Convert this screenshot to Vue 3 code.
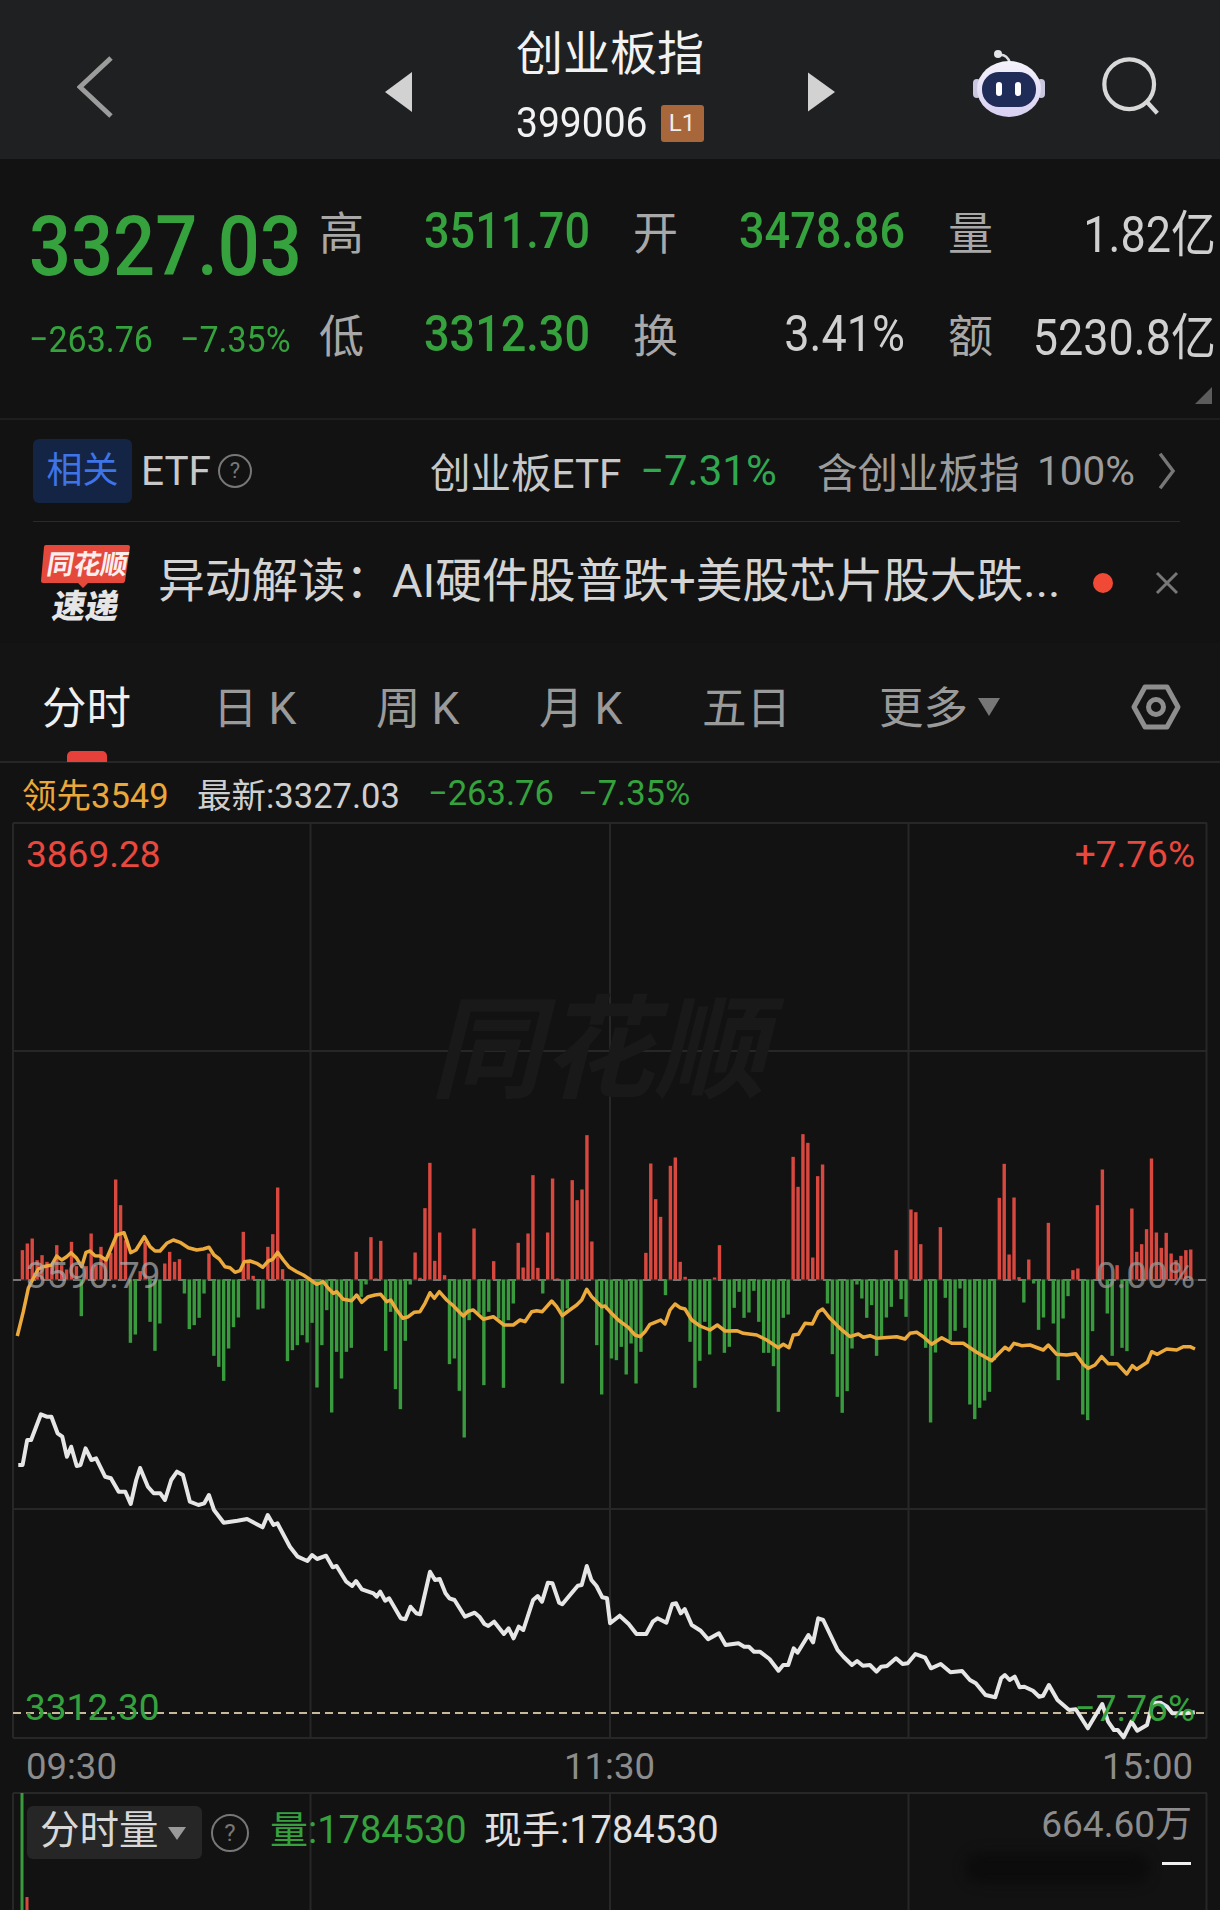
<script setup>
const tabs = [
  { label: '分时', active: true },
  { label: '日 K' },
  { label: '周 K' },
  { label: '月 K' },
  { label: '五日' }
]

const quotes = [
  { label: '高', value: '3511.70', tone: 'down' },
  { label: '开', value: '3478.86', tone: 'down' },
  { label: '量', value: '1.82亿', tone: 'flat' },
  { label: '低', value: '3312.30', tone: 'down' },
  { label: '换', value: '3.41%', tone: 'flat' },
  { label: '额', value: '5230.8亿', tone: 'flat' }
]

const gridX = [13, 310.5, 610, 908.5, 1206.5]
const gridY = [823, 1051, 1280, 1509, 1738]

// one value per minute, traced at 3x, positive = buy side
const flow = [
  0, 88, 108, 123, 58, 73, 53, 43, 103, 43, 30, 113, 40, -110, 40, 138, 43, 98, 60, 80,
  300, 223, 118, -190, -165, 25, 113, -127, -214, -132, 48, 83, 53, 61, -42, -149, -137, -115, -42, 78,
  -229, -262, -304, -207, -143, -114, 143, 58, 11, -90, -87, 98, 136, 276, 31, -245, -212, -197, -167, -189,
  -130, -324, -197, -92, -399, -217, -297, -217, -205, 83, -52, -15, 127, 3, 116, -214, -97, -329, -389, -184,
  -15, 81, 5, 214, 350, 56, 141, 13, -254, -237, -334, -474, -122, 153, -102, -317, -97, 55, -117, -325,
  -122, -72, 110, 36, 138, 313, 35, -42, 141, 303, 3, -312, -87, 298, 238, 270, 433, 114, -197, -345,
  -90, -237, -242, -202, -285, -192, -312, -217, 80, 348, 241, 188, -47, 341, 366, 53, 8, -187, -325, -244,
  -127, -225, 6, 103, -220, -202, -85, -37, -115, -99, -34, -127, -220, -220, -260, -397, -115, -105, 368, 278,
  436, 410, 66, 310, 345, -72, -224, -352, -400, -335, -207, -15, -57, -115, -77, -229, -172, -114, -82, 88,
  -59, -112, 210, 202, 106, -205, -429, -219, 157, -55, -182, -154, -27, -145, -375, -419, -385, -363, -337, -242,
  245, 347, 75, 246, 7, -69, 60, -12, -151, -114, 170, -132, -302, -117, -50, 28, 33, -405, -422, -155,
  223, 330, -102, -229, 43, -205, -215, 213, 83, 106, 151, 363, 141, 95, 140, 78, 58, 71, 88, 90, 0
]

const bars = flow
  .map((v, i) => ({ x: 15.8 + i * 4.909, v: v / 3 }))
  .filter(b => b.v !== 0)
  .map(b => ({
    x: b.x,
    y: b.v > 0 ? 1279.5 - b.v : 1279.5,
    h: Math.abs(b.v),
    color: b.v > 0 ? '#d9483f' : '#3a9a3e'
  }))

// traced points are in crop coordinates, this maps them back onto the page
function trace(pts, x0, y0, sx, sy) {
  const out = []
  for (let i = 0; i < pts.length; i += 2) {
    out.push((x0 + pts[i] / sx).toFixed(1) + ',' + (y0 + pts[i + 1] / sy).toFixed(1))
  }
  return out
}

const avgLine = [
  ...trace([22,633,40,560,55,490,70,460,85,432,100,425,125,420,140,393,155,405,170,395,183,383,200,400,215,425,228,382,240,378,255,392,270,393,288,405,305,365,320,330,342,323,350,345,362,383,378,375,403,335,420,365,435,378,450,378,470,355,490,345,510,352,535,368,560,375,580,372,597,367,612,390,628,402,645,425,660,428,675,442,690,437,703,410,720,408,740,415,758,427,775,408,788,403,803,382,820,405,838,427,860,440,880,450,898,462], 10, 1125, 3, 3),
  ...trace([20,478,40,470,55,490,70,505,80,500,100,523,125,527,140,510,155,532,175,515,195,510,212,508,230,530,242,525,260,555,278,580,295,575,312,562,330,560,345,535,360,503,373,520,388,500,410,525,430,542,460,573,475,558,490,555,520,583,550,575,582,600,610,600,630,585,645,590,665,560,680,557,697,560,725,528,740,545,757,572,775,558,800,540,815,525,830,493,845,515,875,545,885,543,900,560], 310, 1125, 3, 3),
  ...trace([25,585,55,607,75,630,90,635,105,620,120,598,135,592,152,585,165,597,180,555,195,537,210,548,225,552,245,585,270,603,300,615,322,600,345,618,380,617,400,625,440,630,470,645,505,668,520,658,537,668,550,630,565,628,585,595,607,597,625,560,638,552,660,580,690,610,720,635,745,627,760,637,780,632,800,640,860,635,885,642,900,625], 610, 1125, 3, 3),
  ...trace([20,622,40,635,65,658,95,638,125,655,160,655,200,682,245,707,270,682,285,667,297,675,312,655,335,662,360,660,400,675,415,660,440,688,470,690,497,686,520,718,535,730,555,720,575,695,595,716,622,716,650,747,667,722,680,733,712,712,725,680,742,688,770,672,800,675,820,665,840,665,855,672], 910, 1125, 3, 3)
].join(' ')

const priceLine = [
  ...trace([47,1095,58,1095,70,1020,80,1020,105,943,120,950,132,950,148,1000,160,1010,172,1070,183,1040,197,1098,207,1095,220,1045,235,1080,247,1075,270,1130,285,1135], 0, 1100, 2.57, 3),
  ...trace([305,35,322,35,336,72,350,0,360,-36,380,20,395,40,412,40,424,60,440,0,455,-25,470,-15,478,20,488,65,510,75,525,70,537,45,550,90,575,128,610,122,635,117,675,142,688,105,703,135,713,130,745,200,765,230,790,243,802,225,815,237,838,227,855,262,865,258,890,305,905,318,915,303,930,328,960,340,968,350,977,335,990,362,1000,355,1030,415,1042,418,1055,380,1070,400,1080,403,1105,275,1118,300,1130,297,1145,340,1155,355,1168,360,1195,410,1220,398,1232,410,1245,432,1255,438,1270,425,1295,462,1307,445,1320,475,1333,440,1345,450,1370,360,1382,348,1393,365,1408,308,1420,310,1437,368,1445,373,1465,345,1485,317,1495,315,1508,258,1520,300,1533,318,1548,352,1560,355,1568,430], 0, 1480, 2.57, 3),
  ...trace([25,407,48,432,68,462,93,462,110,425,122,415,145,428,160,372,170,370,182,400,192,387,210,435,233,452,252,478,280,460,297,495,330,490,345,500,357,500,370,515,385,515,410,537,433,572,445,555,458,555,472,505,482,518,510,465,522,487,535,415,548,420,585,510,600,530,622,555,635,543,650,557,668,555,685,575,697,560,712,558,735,535,752,552,765,550,785,522,810,533,825,565,850,552,875,577,905,573,925,600,940,610,965,645,990,652,1005,595,1015,585,1027,600,1040,590,1053,622,1065,620,1087,632,1103,650,1113,647,1128,615,1150,660,1180,690,1197,688,1228,745,1265,672,1280,725,1295,750,1305,750,1320,772,1340,725,1355,752,1380,735,1395,668,1415,668,1432,680,1445,700,1480,700,1503,697], 610, 1480, 2.57, 3)
].join(' ')
</script>

<template>
  <div class="page">
    <header class="topbar">
      <svg class="back" viewBox="0 0 36 62" fill="none">
        <path d="M34 2 3 31l31 29" />
      </svg>
      <div class="title-wrap">
        <svg class="tri" viewBox="0 0 27 40"><path d="M27 0v40L0 20z" /></svg>
        <div class="title">
          <div class="name">创业板指</div>
          <div class="code"><span class="code-num">399006</span><span class="level">L1</span></div>
        </div>
        <svg class="tri" viewBox="0 0 25 36"><path d="M0 0v36l25-18z" /></svg>
      </div>
      <svg class="robot" viewBox="0 0 72 68">
        <defs>
          <linearGradient id="shell" x1="0" y1="0" x2="0" y2="1">
            <stop offset="0" stop-color="#f4f2fb" />
            <stop offset="1" stop-color="#d8cff2" />
          </linearGradient>
        </defs>
        <path d="M25 5c6-1 10 2 12 8" fill="none" stroke="#dcdce4" stroke-width="2.5" />
        <circle cx="25" cy="4" r="4" fill="#e4e4ea" />
        <rect x="0" y="29" width="8" height="19" rx="4" fill="#c9c6de" />
        <rect x="64" y="29" width="8" height="19" rx="4" fill="#c9c6de" />
        <ellipse cx="36" cy="39" rx="32" ry="28" fill="url(#shell)" />
        <rect x="9" y="22" width="54" height="35" rx="17" fill="#202c58" />
        <rect x="23" y="32" width="6" height="14" rx="3" fill="#fff" />
        <rect x="42" y="32" width="6" height="14" rx="3" fill="#fff" />
      </svg>
      <svg class="search" viewBox="0 0 64 64" fill="none">
        <circle cx="29" cy="29" r="26.5" />
        <path d="m48 48 11 12" />
      </svg>
    </header>

    <section class="quote">
      <div class="price-col">
        <div class="price">3327.03</div>
        <div class="change"><span>−263.76</span><span>−7.35%</span></div>
      </div>
      <div class="quote-grid">
        <div v-for="q in quotes" :key="q.label" class="quote-cell">
          <span class="q-label">{{ q.label }}</span>
          <span class="q-value" :class="q.tone">{{ q.value }}</span>
        </div>
      </div>
      <span class="corner"></span>
    </section>

    <section class="etf">
      <span class="etf-badge">相关</span>
      <span class="etf-name">ETF</span>
      <span class="help etf-help">?</span>
      <span class="etf-fund">创业板ETF</span>
      <span class="etf-pct">−7.31%</span>
      <span class="etf-hold">含创业板指</span>
      <span class="etf-share">100%</span>
      <svg class="etf-arrow" viewBox="0 0 20 44" fill="none"><path d="m2 2 15 20L2 42" /></svg>
    </section>

    <section class="news">
      <svg class="news-logo" viewBox="0 0 90 76">
        <path d="M5 0h82q2 0 2 2l-5 34q-.5 2-2 2H47l-5 5-5-5H2q-2 0-2-2L3 2q0-2 2-2z" fill="#e4493c" />
        <text class="logo-top" x="45" y="29" text-anchor="middle" transform="skewX(-10) translate(5 0)">同花顺</text>
        <text class="logo-bottom" x="44" y="73" text-anchor="middle" transform="skewX(-10) translate(12 0)">速递</text>
      </svg>
      <span class="news-text">异动解读：AI硬件股普跌+美股芯片股大跌...</span>
      <span class="news-dot"></span>
      <svg class="news-close" viewBox="0 0 24 24" fill="none"><path d="m2 2 20 20M22 2 2 22" /></svg>
    </section>

    <nav class="tabs">
      <div v-for="t in tabs" :key="t.label" class="tab" :class="{ active: t.active }">{{ t.label }}</div>
      <div class="tab more">更多<i class="more-arrow"></i></div>
      <svg class="hex" viewBox="0 0 50 46" fill="none">
        <path d="M14 3h22l11 20-11 20H14L3 23z" />
        <circle cx="25" cy="23" r="7.5" />
      </svg>
    </nav>

    <div class="latest">
      <span class="lead">领先3549</span>
      <span class="now">最新:3327.03</span>
      <span class="down">−263.76</span>
      <span class="down">−7.35%</span>
    </div>

    <div class="chart">
      <svg class="plot" viewBox="13 823 1194 915">
        <line v-for="x in gridX" :key="x" :x1="x" :x2="x" y1="823" y2="1738" class="grid" />
        <line v-for="y in gridY" :key="y" x1="13" x2="1207" :y1="y" :y2="y" class="grid" />
        <line x1="13" x2="1207" y1="1280" y2="1280" class="mid" />
        <rect v-for="b in bars" :key="b.x" :x="b.x" :y="b.y" width="3.4" :height="b.h" :fill="b.color" />
        <line x1="13" x2="1207" y1="1713" y2="1713" class="low" />
        <polyline :points="avgLine" class="avg" />
        <polyline :points="priceLine" class="last" />
      </svg>
      <div class="watermark">同花顺</div>
      <span class="axis tl up">3869.28</span>
      <span class="axis tr up">+7.76%</span>
      <span class="axis ml">3590.79</span>
      <span class="axis mr">0.00%</span>
      <span class="axis bl down">3312.30</span>
      <span class="axis br down">−7.76%</span>
    </div>

    <div class="times"><span>09:30</span><span>11:30</span><span>15:00</span></div>

    <div class="volume">
      <svg class="plot" viewBox="13 1793 1194 117">
        <line v-for="x in gridX" :key="x" :x1="x" :x2="x" y1="1793" y2="1910" class="grid" />
        <line x1="13" x2="1207" y1="1793" y2="1793" class="grid" />
        <rect x="20.5" y="1793" width="3" height="117" fill="#3a9a3e" />
        <rect x="25.5" y="1897" width="3" height="13" fill="#d9483f" />
      </svg>
      <div class="vol-row">
        <div class="vol-select">分时量<i class="vol-arrow"></i></div>
        <span class="help vol-help">?</span>
        <span class="vol-qty">量:1784530</span>
        <span class="vol-hand">现手:1784530</span>
      </div>
      <span class="vol-max">664.60万</span>
      <span class="smudge"></span>
      <span class="vol-mark"></span>
    </div>
  </div>
</template>

<style scoped>
.page {
  position: relative;
  width: 1220px;
  height: 1910px;
  overflow: hidden;
  background: #121212;
  color: #d8d8d8;
  font-family: Roboto, "Noto Sans CJK SC", sans-serif;
}

.topbar {
  position: relative;
  height: 159px;
  background: #1e2021;
}

.back {
  position: absolute;
  left: 77px;
  top: 56px;
  width: 36px;
  height: 62px;
  stroke: #9c9c9c;
  stroke-width: 5;
}

.title-wrap {
  position: absolute;
  left: 385px;
  top: 24px;
  width: 450px;
  display: flex;
  align-items: center;
  justify-content: space-between;
}

.tri {
  width: 27px;
  height: 40px;
  margin-top: 14px;
  fill: #d2d2d2;
}

.title {
  text-align: center;
  color: #f2f2f2;
}

.name {
  font-size: 47px;
  line-height: 60px;
}

.code {
  display: flex;
  align-items: center;
  margin-top: 17px;
  font-size: 39px;
  line-height: 44px;
}

.code-num {
  transform: scaleY(1.1);
}

.level {
  width: 43px;
  height: 37px;
  margin-left: 13px;
  border-radius: 3px;
  background: #a8673a;
  color: #eee;
  font-size: 24px;
  line-height: 37px;
}

.robot {
  position: absolute;
  left: 973px;
  top: 50px;
  width: 72px;
  height: 68px;
}

.search {
  position: absolute;
  left: 1102px;
  top: 57px;
  width: 60px;
  height: 60px;
  stroke: #d8d8d8;
  stroke-width: 4.5;
}

.quote {
  position: relative;
  display: flex;
  height: 261px;
  border-bottom: 2px solid #1e1e1e;
  box-sizing: border-box;
}

.price-col {
  width: 319px;
  padding: 47px 0 0 29px;
  box-sizing: border-box;
  color: #35a23e;
}

.price {
  font-size: 74px;
  font-weight: 500;
  line-height: 82px;
  transform: scaleY(1.12);
  transform-origin: left center;
}

.change {
  display: flex;
  gap: 27px;
  margin-top: 31px;
  font-size: 34px;
  line-height: 40px;
  white-space: nowrap;
  transform: scaleY(1.1);
  transform-origin: left center;
}

.quote-grid {
  display: grid;
  grid-template-columns: 271px 272px 268px;
  column-gap: 43px;
  grid-auto-rows: 103px;
  padding-top: 20px;
}

.quote-cell {
  display: flex;
  align-items: center;
  justify-content: space-between;
  height: 102px;
}

.q-label {
  font-size: 45px;
  color: #a8a8a8;
}

.q-value {
  display: inline-block;
  font-size: 45px;
  transform: scaleY(1.12);
  transform-origin: right center;
}

.q-value.down {
  color: #35a23e;
  font-weight: 500;
}

.q-value.flat {
  color: #d0d0d0;
}

.corner {
  position: absolute;
  right: 8px;
  bottom: 14px;
  width: 17px;
  height: 17px;
  background: #5c5c5c;
  clip-path: polygon(100% 0, 100% 100%, 0 100%);
}

.etf {
  display: flex;
  align-items: center;
  height: 101px;
  margin: 0 40px 0 33px;
  border-bottom: 1px solid #2a2a2a;
  font-size: 40.5px;
  color: #c8c8c8;
  white-space: nowrap;
}

.etf-badge {
  width: 99px;
  height: 64px;
  border-radius: 6px;
  background: #142444;
  color: #3f74e8;
  font-size: 36px;
  line-height: 64px;
  text-align: center;
}

.etf-name {
  margin-left: 9px;
  width: 77px;
}

.help {
  display: inline-block;
  box-sizing: border-box;
  border: 2px solid #777;
  border-radius: 50%;
  color: #777;
  text-align: center;
}

.etf-help {
  width: 34px;
  height: 34px;
  font-size: 22px;
  line-height: 30px;
}

.etf-fund {
  margin-left: 178px;
  width: 210px;
}

.etf-pct {
  width: 177px;
  font-size: 42px;
  color: #2fa84f;
}

.etf-hold {
  width: 220px;
  color: #9c9c9c;
}

.etf-share {
  width: 120px;
  color: #9c9c9c;
}

.etf-arrow {
  width: 20px;
  height: 38px;
  stroke: #777;
  stroke-width: 4;
}

.news {
  display: flex;
  align-items: center;
  height: 121px;
  padding-left: 41px;
}

.news-logo {
  width: 90px;
  height: 76px;
  overflow: visible;
}

.logo-top {
  font-size: 27px;
  font-weight: 700;
  fill: #fbeeee;
}

.logo-bottom {
  font-size: 33px;
  font-weight: 900;
  fill: #e6e6e6;
}

.news-text {
  margin: -12px 0 0 27px;
  width: 899px;
  font-size: 46.8px;
  white-space: nowrap;
  color: #d4d4d4;
}

.news-dot {
  width: 20px;
  height: 20px;
  margin-left: 36px;
  border-radius: 50%;
  background: #f04a36;
}

.news-close {
  width: 24px;
  height: 24px;
  margin-left: 42px;
  stroke: #777;
  stroke-width: 3;
}

.tabs {
  position: relative;
  display: flex;
  height: 120px;
  align-items: center;
  box-sizing: border-box;
  border-bottom: 2px solid #262626;
  background: #141414;
  padding: 4px 0 0 42px;
  font-size: 44.5px;
  color: #9a9a9a;
}

.tab {
  position: relative;
  width: 163px;
  white-space: nowrap;
}

.tab.active {
  width: 171px;
  color: #efefef;
}

.tab.active::after {
  content: '';
  position: absolute;
  left: 25px;
  top: 79px;
  width: 40px;
  height: 11px;
  border-radius: 5px 5px 0 0;
  background: #e5413a;
}

.tab.more {
  margin-left: 14px;
}

.more-arrow {
  position: absolute;
  left: 99px;
  top: 26px;
  border-left: 11px solid transparent;
  border-right: 11px solid transparent;
  border-top: 18px solid #777;
}

.hex {
  position: absolute;
  left: 1131px;
  top: 41px;
  width: 50px;
  height: 46px;
  stroke: #8e8e8e;
  stroke-width: 5;
  stroke-linejoin: round;
}

.latest {
  display: flex;
  align-items: center;
  height: 60px;
  padding-left: 22px;
  font-size: 34.5px;
  white-space: nowrap;
}

.lead {
  width: 175px;
  color: #eba83a;
}

.now {
  width: 231px;
  color: #cfcfcf;
}

.latest .down:nth-child(3) {
  width: 150px;
}

.down {
  color: #35a23e;
}

.up {
  color: #e8483e;
}

.chart {
  position: relative;
  height: 915px;
  margin: 0 13px;
}

.plot {
  position: absolute;
  left: 0;
  top: 0;
  width: 1194px;
  height: 100%;
  overflow: visible;
}

.grid {
  stroke: #272727;
  stroke-width: 2;
}

.mid {
  stroke: #777;
  stroke-width: 2;
  stroke-dasharray: 8 7;
}

.low {
  stroke: #c8b99a;
  stroke-width: 2;
  stroke-dasharray: 8 5;
}

.avg {
  fill: none;
  stroke: #ecaa3c;
  stroke-width: 3.5;
  stroke-linejoin: round;
}

.last {
  fill: none;
  stroke: #e6e6e6;
  stroke-width: 4;
  stroke-linejoin: round;
}

.watermark {
  position: absolute;
  left: 417px;
  top: 158px;
  font-size: 112px;
  font-style: italic;
  font-weight: 700;
  line-height: 140px;
  color: #191919;
}

.axis {
  position: absolute;
  font-size: 37px;
  line-height: 40px;
}

.tl {
  left: 13px;
  top: 12px;
}

.tr {
  right: 12px;
  top: 12px;
}

.ml {
  left: 13px;
  top: 433px;
  color: rgba(170, 170, 170, 0.72);
}

.mr {
  right: 12px;
  top: 433px;
  color: rgba(150, 150, 150, 0.75);
}

.bl {
  left: 12px;
  top: 865px;
}

.br {
  right: 12px;
  top: 866px;
}

.times {
  display: flex;
  justify-content: space-between;
  height: 55px;
  padding: 0 27px 0 26px;
  font-size: 36.5px;
  line-height: 58px;
  color: #8c8c8c;
}

.volume {
  position: relative;
  height: 117px;
  margin: 0 13px;
}

.vol-row {
  position: absolute;
  left: 14px;
  top: 13px;
  display: flex;
  align-items: center;
  height: 53px;
  font-size: 38px;
  line-height: 42px;
  white-space: nowrap;
}

.vol-select {
  position: relative;
  width: 175px;
  height: 53px;
  box-sizing: border-box;
  padding-left: 13px;
  border-radius: 6px;
  background: #262626;
  font-size: 39.5px;
  line-height: 50px;
}

.vol-arrow {
  position: absolute;
  left: 141px;
  top: 21px;
  border-left: 9px solid transparent;
  border-right: 9px solid transparent;
  border-top: 13px solid #999;
}

.vol-help {
  width: 38px;
  height: 38px;
  margin-left: 9px;
  font-size: 24px;
  line-height: 34px;
}

.vol-qty {
  margin: 0 0 6px 21px;
  width: 214px;
  color: #35a23e;
}

.vol-hand {
  margin-bottom: 6px;
  color: #e0e0e0;
}

.vol-max {
  position: absolute;
  right: 15px;
  top: 10px;
  font-size: 37px;
  line-height: 44px;
  color: #8c8c8c;
}

.smudge {
  position: absolute;
  left: 952px;
  top: 60px;
  width: 185px;
  height: 30px;
  border-radius: 15px;
  background: #0c0c0c;
  filter: blur(6px);
}

.vol-mark {
  position: absolute;
  right: 16px;
  top: 69px;
  width: 29px;
  height: 3px;
  background: #f0f0f0;
}
</style>

<style>
html,
body {
  background: #121212;
  overflow: hidden;
}
</style>
